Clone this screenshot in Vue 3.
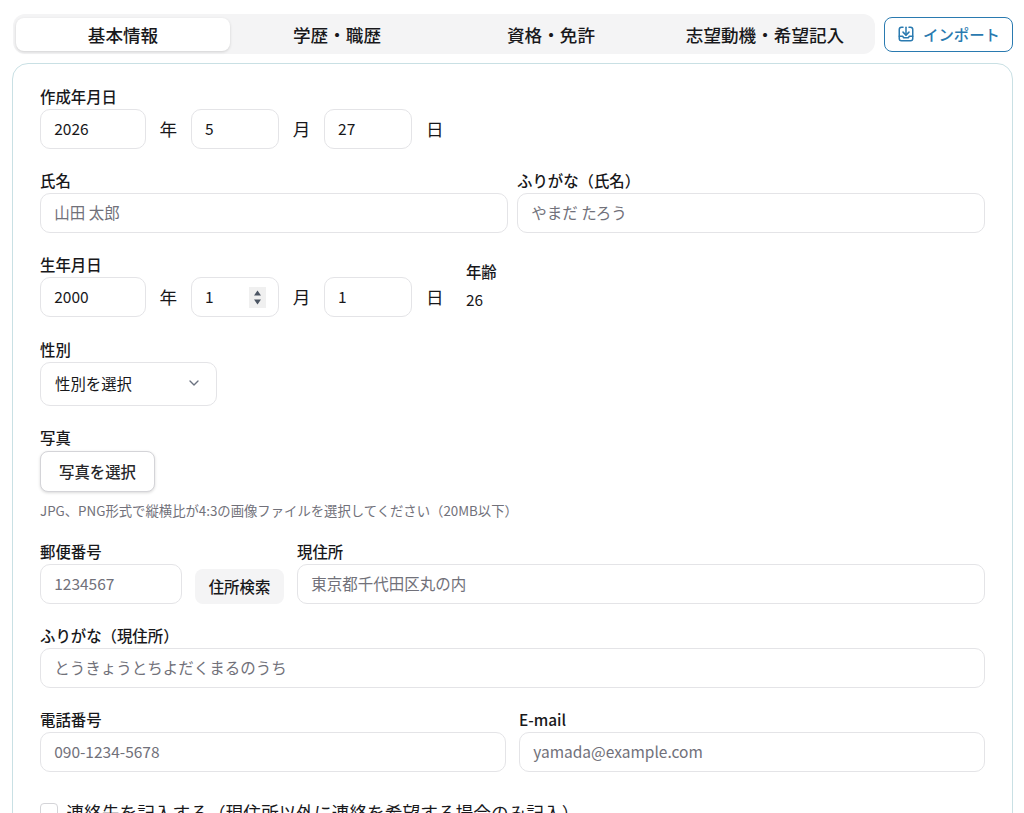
<template>
  <div class="page">
    <div class="top">
      <div class="tabs">
        <button v-for="(t, i) in tabs" :key="t" class="tab" :class="{ active: i === 0 }">{{ t }}</button>
      </div>
      <button class="import">
        <svg width="18" height="18" viewBox="0 0 24 24" fill="none" stroke="currentColor" stroke-width="2" stroke-linecap="round" stroke-linejoin="round">
          <path d="M8 3H6a3 3 0 0 0-3 3v12a3 3 0 0 0 3 3h12a3 3 0 0 0 3-3V6a3 3 0 0 0-3-3h-2" />
          <path d="M12 3v10" />
          <path d="M8 9.5l4 4 4-4" />
          <path d="M3 15h4.5l1.5 2h6l1.5-2H21" />
        </svg>
        <span>インポート</span>
      </button>
    </div>

    <div class="card">
      <div class="field">
        <label class="lab">作成年月日</label>
        <div class="date">
          <input class="inp y" value="2026" />
          <span class="u">年</span>
          <input class="inp m" value="5" />
          <span class="u">月</span>
          <input class="inp m" value="27" />
          <span class="u">日</span>
        </div>
      </div>

      <div class="row name">
        <div class="field grow">
          <label class="lab">氏名</label>
          <input class="inp" placeholder="山田 太郎" />
        </div>
        <div class="field grow">
          <label class="lab">ふりがな（氏名）</label>
          <input class="inp" placeholder="やまだ たろう" />
        </div>
      </div>

      <div class="birth">
        <div class="field">
          <label class="lab">生年月日</label>
          <div class="date">
            <input class="inp y" value="2000" />
            <span class="u">年</span>
            <div class="spin-wrap">
              <input class="inp m" value="1" />
              <div class="spin">
                <svg width="9" height="8" viewBox="0 0 9 8"><path d="M4.5 1.5L8 6.5H1z" fill="#4b5563" /></svg>
                <svg width="9" height="8" viewBox="0 0 9 8"><path d="M4.5 6.5L8 1.5H1z" fill="#4b5563" /></svg>
              </div>
            </div>
            <span class="u">月</span>
            <input class="inp m" value="1" />
            <span class="u">日</span>
          </div>
        </div>
        <div class="age">
          <div class="lab">年齢</div>
          <div class="age-v">26</div>
        </div>
      </div>

      <div class="field gender">
        <label class="lab">性別</label>
        <div class="sel">
          <span>性別を選択</span>
          <svg width="16" height="16" viewBox="0 0 24 24" fill="none" stroke="#6b7280" stroke-width="2" stroke-linecap="round" stroke-linejoin="round"><path d="M6 9l6 6 6-6" /></svg>
        </div>
      </div>

      <div class="field photo">
        <label class="lab">写真</label>
        <button class="pick">写真を選択</button>
        <p class="help">JPG、PNG形式で縦横比が4:3の画像ファイルを選択してください（20MB以下）</p>
      </div>

      <div class="row addr">
        <div class="field zip">
          <label class="lab">郵便番号</label>
          <input class="inp" placeholder="1234567" />
        </div>
        <button class="search">住所検索</button>
        <div class="field grow">
          <label class="lab">現住所</label>
          <input class="inp" placeholder="東京都千代田区丸の内" />
        </div>
      </div>

      <div class="field next">
        <label class="lab">ふりがな（現住所）</label>
        <input class="inp" placeholder="とうきょうとちよだくまるのうち" />
      </div>

      <div class="row tel">
        <div class="field grow">
          <label class="lab">電話番号</label>
          <input class="inp" placeholder="090-1234-5678" />
        </div>
        <div class="field grow">
          <label class="lab">E-mail</label>
          <input class="inp" placeholder="yamada@example.com" />
        </div>
      </div>

      <label class="check">
        <span class="box"></span>
        <span>連絡先を記入する（現住所以外に連絡を希望する場合のみ記入）</span>
      </label>
    </div>
  </div>
</template>

<script setup>
const tabs = ['基本情報', '学歴・職歴', '資格・免許', '志望動機・希望記入']
</script>

<style>
html, body { margin: 0; background: #fff; }
</style>

<style scoped>
.page {
  box-sizing: border-box;
  height: 813px;
  overflow: hidden;
  padding: 14px 11px 0 12px;
  font-family: "Noto Sans CJK JP", "Noto Sans", sans-serif;
  color: #18181b;
  font-size: 17.6px;
}
.top { display: flex; align-items: center; gap: 9px; margin-left: 1px; }
.tabs {
  flex: 1;
  display: grid;
  grid-template-columns: repeat(4, 1fr);
  height: 40px;
  box-sizing: border-box;
  padding: 4px 3px;
  background: #f4f4f5;
  border-radius: 12px;
}
.tab {
  border: 0;
  background: transparent;
  font: 500 17.6px/32px "Noto Sans CJK JP", sans-serif;
  color: #18181b;
  border-radius: 8px;
  padding: 1px 0 0;
}
.tab.active { background: #fff; box-shadow: 0 1px 3px rgba(0,0,0,.15); }
.import {
  width: 129px;
  height: 35px;
  box-sizing: border-box;
  display: flex;
  align-items: center;
  justify-content: center;
  gap: 8px;
  background: #fff;
  border: 1px solid #2a7ab0;
  border-radius: 8px;
  color: #2a7ab0;
  font: 500 15.4px "Noto Sans CJK JP", sans-serif;
  padding: 0;
}
.card {
  margin-top: 9px;
  box-sizing: border-box;
  height: 800px;
  border: 1px solid #c9e0e4;
  border-radius: 16px;
  padding: 21px 27px 0;
}
.field { display: flex; flex-direction: column; min-width: 0; }
.grow { flex: 1; }
.lab { display: block; font-size: 15.4px; line-height: 22px; font-weight: 500; color: #18181b; margin-bottom: 2px; }
.inp {
  box-sizing: border-box;
  height: 40px;
  width: 100%;
  min-width: 0;
  padding: 0 13.2px 2px;
  border: 1px solid #e4e4e7;
  border-radius: 10px;
  background: #fff;
  outline: none;
  font: 400 15.5px "Noto Sans CJK JP", sans-serif;
  color: #18181b;
}
.inp::placeholder { color: #71717a; opacity: 1; }
.date { display: flex; align-items: center; gap: 13.2px; }
.inp.y { width: 106px; }
.inp.m { width: 88.4px; }
.u { width: 18.4px; text-align: center; font-size: 17.6px; padding-bottom: 2px; }
.spin-wrap { position: relative; }
.spin {
  position: absolute;
  right: 13px;
  top: 10px;
  width: 17px;
  height: 21px;
  background: #f0f0f0;
  display: flex;
  flex-direction: column;
  align-items: center;
  justify-content: center;
  gap: 1px;
}
.row { display: flex; }
.name { gap: 9px; margin-top: 20px; }
.birth { display: flex; gap: 22px; margin-top: 20px; }
.age { margin-top: 7px; }
.age-v { font-size: 15.4px; line-height: 22px; margin-top: 6px; }
.gender { margin-top: 21px; align-items: flex-start; }
.sel {
  box-sizing: border-box;
  width: 177px;
  height: 44px;
  border: 1px solid #e4e4e7;
  border-radius: 10px;
  display: flex;
  align-items: center;
  justify-content: space-between;
  padding: 0 14px 2px;
  font-size: 15.4px;
}
.photo { margin-top: 20px; align-items: flex-start; }
.photo .lab { margin-bottom: 3px; }
.pick {
  width: 115px;
  height: 41px;
  background: #fff;
  border: 1px solid #d4d4d8;
  border-radius: 8px;
  box-shadow: 0 1px 3px rgba(0,0,0,.15);
  font: 500 15.4px "Noto Sans CJK JP", sans-serif;
  color: #27272a;
  padding: 0 0 2px;
}
.help { margin: 9px 0 0; font-size: 13.35px; line-height: 20px; color: #71717a; }
.addr { gap: 13px; margin-top: 19px; align-items: flex-end; }
.addr .inp { height: 39.5px; }
.zip { width: 142px; }
.search {
  width: 89px;
  height: 35px;
  border: 0;
  border-radius: 8px;
  background: #f4f4f5;
  font: 500 15.4px "Noto Sans CJK JP", sans-serif;
  color: #18181b;
  padding: 0;
}
.next { margin-top: 20.5px; }
.tel { gap: 13px; margin-top: 20px; }
.check { display: flex; align-items: center; gap: 8.8px; margin-top: 27px; line-height: 26px; font-size: 17.7px; }
.box { width: 17.6px; height: 17.6px; box-sizing: border-box; border: 1px solid #d4d4d8; border-radius: 4px; background: #fff; }
</style>
